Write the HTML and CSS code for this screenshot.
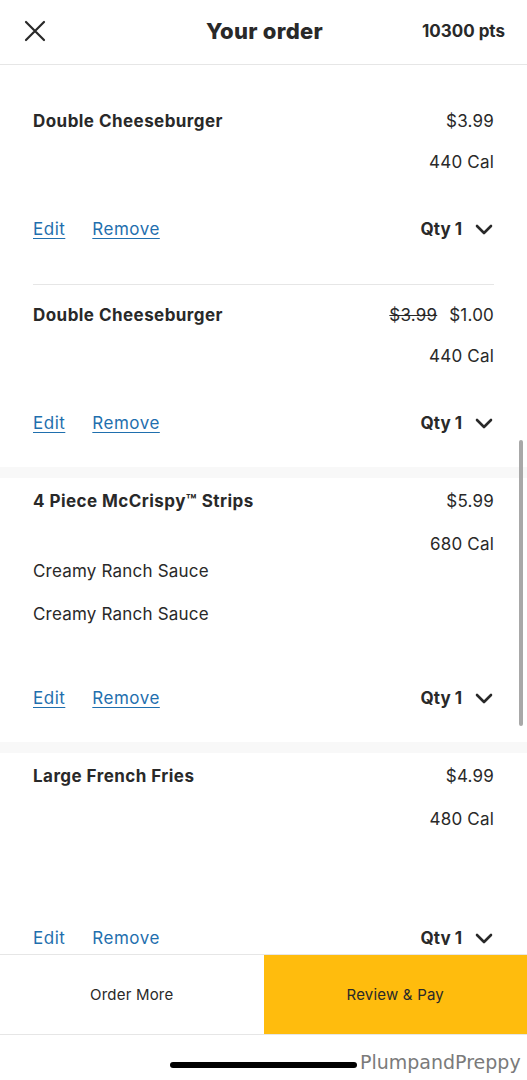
FILE: index.html
```html
<!DOCTYPE html>
<html lang="en">
<head>
<meta charset="utf-8">
<title>Your order</title>
<link rel="stylesheet" href="styles.css">
</head>
<body>
<div class="screen">
  <header class="topbar">
    <button class="close" aria-label="Close">
      <svg width="22" height="22" viewBox="0 0 22 22"><path d="M2 2 L20 20 M20 2 L2 20" stroke="#292929" stroke-width="2.2" stroke-linecap="round" fill="none"/></svg>
    </button>
    <h1 class="title">Your order</h1>
    <div class="points">10300 pts</div>
  </header>

  <main class="list">
    <section class="item item-1">
      <div class="row"><span class="name">Double Cheeseburger</span><span class="price">$3.99</span></div>
      <div class="cal cal-tight">440 Cal</div>
      <div class="actions gap-43">
        <a class="link" href="#">Edit</a><a class="link" href="#">Remove</a>
        <span class="qty">Qty 1 <svg class="chev" width="18" height="11" viewBox="0 0 18 11"><path d="M2 2 L9 9 L16 2" stroke="#292929" stroke-width="2.6" stroke-linecap="round" stroke-linejoin="round" fill="none"/></svg></span>
      </div>
    </section>

    <section class="item item-2">
      <div class="row"><span class="name">Double Cheeseburger</span><span class="price"><s class="old">$3.99</s>$1.00</span></div>
      <div class="cal cal-tight">440 Cal</div>
      <div class="actions gap-43">
        <a class="link" href="#">Edit</a><a class="link" href="#">Remove</a>
        <span class="qty">Qty 1 <svg class="chev" width="18" height="11" viewBox="0 0 18 11"><path d="M2 2 L9 9 L16 2" stroke="#292929" stroke-width="2.6" stroke-linecap="round" stroke-linejoin="round" fill="none"/></svg></span>
      </div>
    </section>

    <div class="band"></div>

    <section class="item item-3">
      <div class="row"><span class="name">4 Piece McCrispy™ Strips</span><span class="price">$5.99</span></div>
      <div class="cal">680 Cal</div>
      <div class="custom first">Creamy Ranch Sauce</div>
      <div class="custom">Creamy Ranch Sauce</div>
      <div class="actions gap-60">
        <a class="link" href="#">Edit</a><a class="link" href="#">Remove</a>
        <span class="qty">Qty 1 <svg class="chev" width="18" height="11" viewBox="0 0 18 11"><path d="M2 2 L9 9 L16 2" stroke="#292929" stroke-width="2.6" stroke-linecap="round" stroke-linejoin="round" fill="none"/></svg></span>
      </div>
    </section>

    <div class="band"></div>

    <section class="item item-4">
      <div class="row"><span class="name">Large French Fries</span><span class="price">$4.99</span></div>
      <div class="cal">480 Cal</div>
      <div class="actions gap-95">
        <a class="link" href="#">Edit</a><a class="link" href="#">Remove</a>
        <span class="qty">Qty 1 <svg class="chev" width="18" height="11" viewBox="0 0 18 11"><path d="M2 2 L9 9 L16 2" stroke="#292929" stroke-width="2.6" stroke-linecap="round" stroke-linejoin="round" fill="none"/></svg></span>
      </div>
    </section>

    <div class="scrollbar"></div>
  </main>

  <footer class="footer">
    <button class="btn btn-more">Order More</button>
    <button class="btn btn-pay">Review &amp; Pay</button>
  </footer>

  <div class="home">
    <div class="home-bar"></div>
    <span class="watermark">PlumpandPreppy</span>
  </div>
</div>
</body>
</html>
```

FILE: styles.css
```css
* { box-sizing: border-box; }
html, body { margin: 0; padding: 0; background: #fff; }
body {
  font-family: Inter, "Noto Sans", "Liberation Sans", sans-serif;
  color: #292929;
}
.screen {
  width: 527px;
  height: 1080px;
  display: flex;
  flex-direction: column;
  overflow: hidden;
  position: relative;
}

/* header */
.topbar {
  height: 65px;
  flex: none;
  border-bottom: 1px solid #e6e6e6;
  display: grid;
  grid-template-columns: 1fr auto 1fr;
  align-items: center;
  padding: 0 22px 2px 24px;
}
.close {
  background: none; border: 0; padding: 0; margin: 0;
  width: 22px; height: 22px;
  display: flex; justify-content: flex-start;
  cursor: pointer;
}
.title {
  margin: 0;
  font-size: 22px;
  font-weight: 800;
  letter-spacing: 0.3px;
}
.points {
  justify-self: end;
  font-size: 17px;
  font-weight: 700;
}

/* list */
.list {
  flex: 1;
  overflow: hidden;
  position: relative;
  margin-bottom: 9px;
}
.item {
  padding: 0 33px;
  font-size: 17px;
  line-height: 24px;
  letter-spacing: 0.2px;
}
.item-1 { padding-top: 44px; }
.item-1 .actions { padding-bottom: 43px; border-bottom: 1px solid #e6e6e6; }
.item-2 { padding-top: 18px; padding-bottom: 32px; }
.item-3 { padding-top: 11px; padding-bottom: 32px; }
.item-4 { padding-top: 11px; }

.row {
  display: flex;
  justify-content: space-between;
  align-items: center;
}
.name { font-weight: 700; letter-spacing: 0.45px; }
.price { font-weight: 400; }
.old { color: #292929; margin-right: 12px; }
.cal { text-align: right; margin-top: 19px; }
.cal.cal-tight { margin-top: 17px; }
.custom { margin-top: 19px; }
.custom.first { margin-top: 3px; }

.actions {
  display: flex;
  align-items: center;
}
.gap-43 { margin-top: 43px; }
.gap-60 { margin-top: 60px; }
.gap-95 { margin-top: 95px; }
.link {
  color: #1f6fae;
  text-decoration: underline;
  text-underline-offset: 3px;
  text-decoration-thickness: 1px;
  margin-right: 27px;
  letter-spacing: 0.5px;
}
.qty {
  margin-left: auto;
  font-weight: 700;
  display: flex;
  align-items: center;
  letter-spacing: 0;
}
.chev { margin-left: 13px; margin-right: 1px; }

.band {
  height: 11px;
  background: #f8f8f8;
}
.scrollbar {
  position: absolute;
  left: 519px;
  top: 375px;
  width: 4px;
  height: 286px;
  border-radius: 2px;
  background: #a8a8a8;
}

/* footer */
.footer {
  flex: none;
  height: 81px;
  display: flex;
  border-top: 1px solid #e6e6e6;
  border-bottom: 1px solid #e6e6e6;
}
.btn {
  flex: 1;
  border: 0;
  margin: 0;
  font-family: inherit;
  font-size: 15px;
  letter-spacing: 0.2px;
  color: #292929;
  background: #fff;
  cursor: pointer;
}
.btn-pay { background: #ffbc0d; }

/* home indicator */
.home {
  flex: none;
  height: 45px;
  position: relative;
  display: flex;
  justify-content: center;
}
.home-bar {
  margin-top: 27px;
  width: 187px;
  height: 6px;
  border-radius: 3px;
  background: #000;
}
.watermark {
  position: absolute;
  left: 360px;
  top: 16px;
  font-family: "DejaVu Sans", sans-serif;
  font-size: 19px;
  color: #7a7a7a;
}
```
